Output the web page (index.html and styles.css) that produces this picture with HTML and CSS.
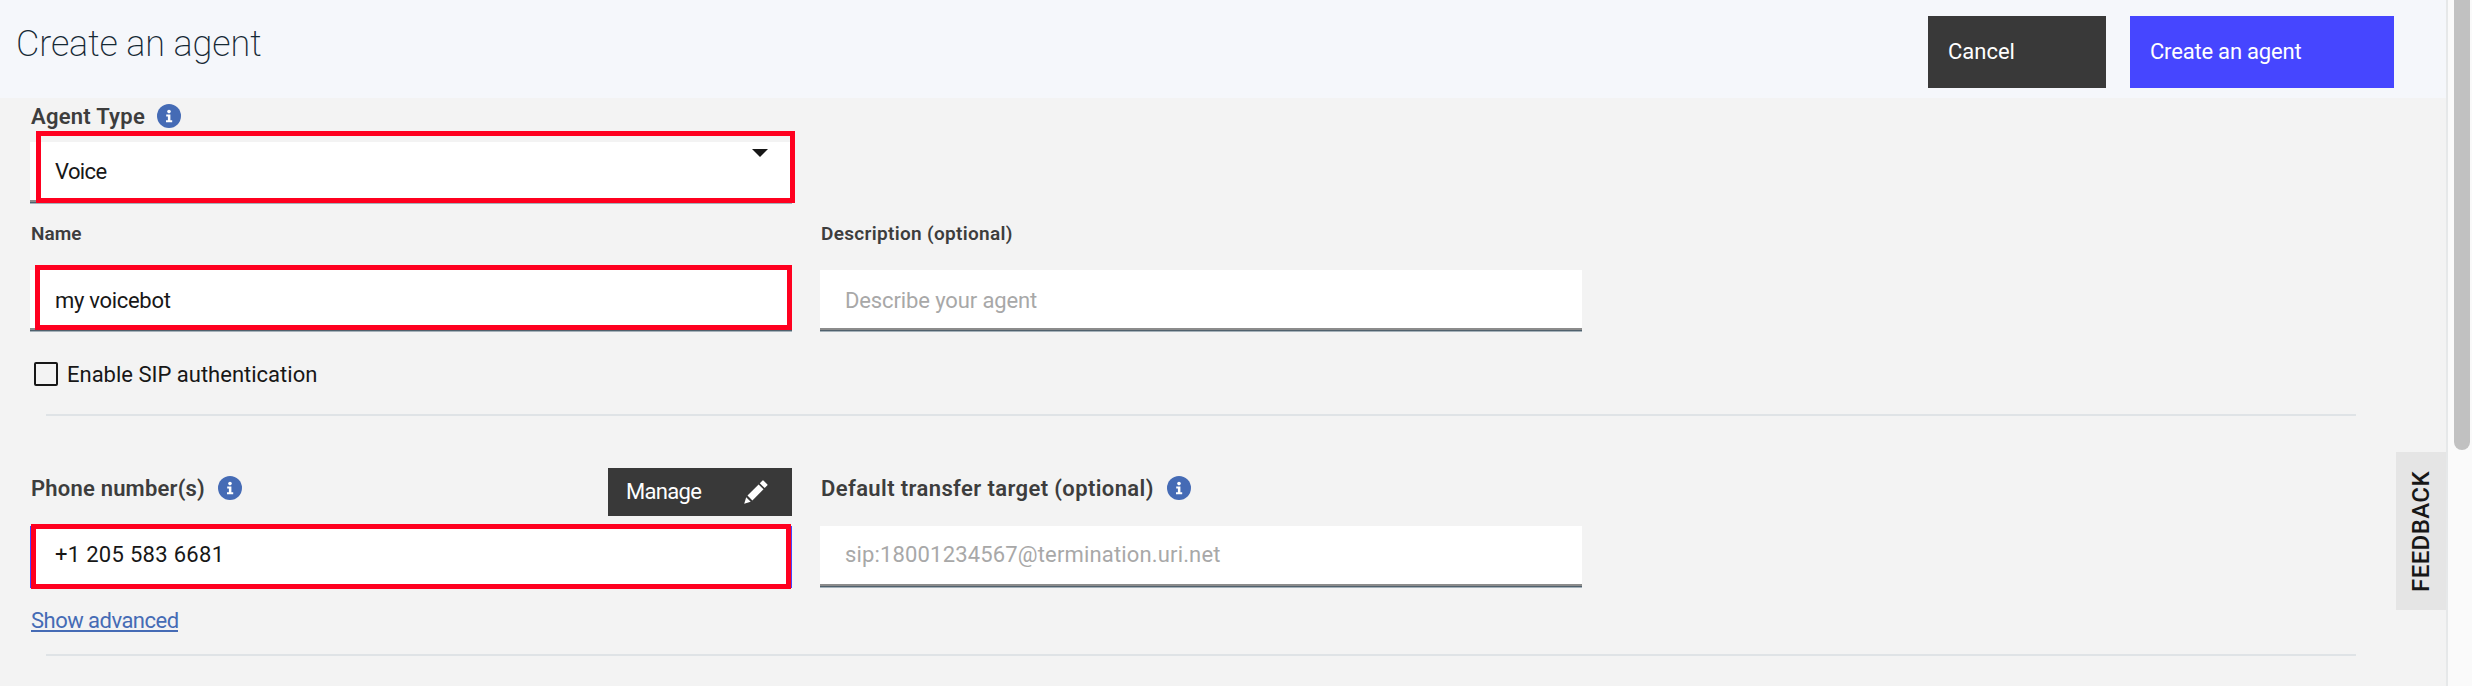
FILE: index.html
```html
<!DOCTYPE html>
<html lang="en">
<head>
<meta charset="utf-8">
<title>Create an agent</title>
<link rel="stylesheet" href="styles.css">
</head>
<body>
<svg class="defs" width="0" height="0" aria-hidden="true">
  <symbol id="info" viewBox="0 0 24 24">
    <circle cx="12" cy="12" r="12" fill="#456bb5"/>
    <circle cx="12" cy="7.6" r="1.8" fill="#fff"/>
    <path d="M9.2 10.5h4.2v5.8h1.8v1.9H9v-1.9h1.9v-3.9H9.2z" fill="#fff"/>
  </symbol>
</svg>
<div class="app">
  <main class="page">
    <header class="header">
      <h1 class="title">Create an agent</h1>
      <div class="actions">
        <button class="btn cancel"><span class="t-cancel">Cancel</span></button>
        <button class="btn primary"><span class="t-create">Create an agent</span></button>
      </div>
    </header>
    <form class="form">
      <div class="label-row type-row"><span class="label t-type">Agent Type</span><svg class="info"><use href="#info"/></svg></div>
      <div class="field select"><span class="t-voice">Voice</span>
        <svg class="caret" viewBox="0 0 16 8"><path d="M0 0h16L8 8z"/></svg>
        <i class="mark mark-type"></i>
      </div>
      <div class="columns">
        <div class="column">
          <div class="label-row name-row"><span class="label small t-name">Name</span></div>
          <div class="field low"><span class="t-bot">my voicebot</span><i class="mark mark-name"></i></div>
        </div>
        <div class="column">
          <div class="label-row name-row"><span class="label small t-desc">Description (optional)</span></div>
          <div class="field low hint"><span class="t-describe">Describe your agent</span></div>
        </div>
      </div>
      <div class="check-row"><span class="box"></span><span class="t-sip">Enable SIP authentication</span></div>
      <div class="rule"></div>
      <div class="columns numbers">
        <div class="column">
          <div class="label-row phone-row"><span class="label t-phone">Phone number(s)</span><svg class="info"><use href="#info"/></svg>
            <button type="button" class="manage"><span class="t-manage">Manage</span>
              <svg class="pencil" viewBox="0 0 24 24"><path d="M18.3 0.7a1 1 0 0 1 1.4 0l3.5 3.5a1 1 0 0 1 0 1.4l-2.5 2.5-4.9-4.9zM14.6 4.4l4.9 4.9L8.4 20.4l-4.9-4.9zM2.2 17.2l4.5 4.5L0.2 23.8z"/></svg>
            </button>
          </div>
          <div class="field focus"><span class="t-number">+1 205 583 6681</span><i class="mark mark-phone"></i></div>
        </div>
        <div class="column">
          <div class="label-row phone-row"><span class="label t-transfer">Default transfer target (optional)</span><svg class="info"><use href="#info"/></svg></div>
          <div class="field hint"><span class="t-uri">sip:18001234567@termination.uri.net</span></div>
        </div>
      </div>
      <a class="advanced"><span class="t-adv">Show advanced</span></a>
      <div class="rule last"></div>
    </form>
  </main>
  <div class="scrollbar"><div class="thumb"></div></div>
  <div class="feedback"><span>FEEDBACK</span></div>
</div>
</body>
</html>
```
FILE: styles.css
```css
* { box-sizing: border-box; }
body {
  margin: 0;
  font: 22px/24px Roboto, "Liberation Sans", sans-serif;
  color: #171717;
  background: #f3f3f3;
}
.defs { position: absolute; }
.app { display: flex; position: relative; height: 686px; overflow: hidden; }
.page { width: 2448px; border-right: 2px solid #e6e8e9; }
.header { display: flex; justify-content: space-between; height: 98px; padding: 16px 52px 0 16px; background: #f5f7fb; }
.title { margin: 4px 0 0; font-size: 36px; line-height: 48px; font-weight: 200; color: #152935; letter-spacing: -0.1px; white-space: nowrap; }
.actions { display: flex; gap: 24px; }
.btn { height: 72px; border: 0; padding: 0 20px; color: #fff; font: inherit; text-align: left; }
.cancel { width: 178px; background: #393939; }
.primary { width: 264px; background: #4646ff; }
.form { padding-left: 30px; }
.label-row { display: flex; align-items: center; }
.label { margin-left: 1px; padding-top: 2px; font-weight: 600; color: #3d3d3d; white-space: nowrap; }
.small { padding-top: 0; font-size: 19px; }
.info { width: 24px; height: 24px; margin-left: 12px; }
.type-row { height: 36px; margin-bottom: 8px; }
.name-row { height: 59px; margin-bottom: 7px; }
.columns { display: flex; gap: 28px; }
.column { width: 762px; }
.field {
  position: relative;
  display: flex;
  align-items: center;
  width: 762px;
  height: 62px;
  padding: 0 0 4px 25px;
  background: #fff;
  box-shadow: inset 0 -1px #a5b1b9, inset 0 -2px #50616d, inset 0 -4px #8c8c8c;
  white-space: nowrap;
}
.select { padding-top: 1px; }
.low { padding-top: 4px; }
.hint { color: #a8a8a8; }
.focus { box-shadow: inset 2px 0 #4646ff, inset -2px 0 #4646ff, inset 0 -1px #4646ff; }
.caret { position: absolute; left: 722px; top: 7px; width: 16px; height: 8px; fill: #171717; }
.mark { position: absolute; border: 5px solid #ff001f; }
.mark-type { left: 6px; top: -11px; width: 759px; height: 72px; }
.mark-name { left: 5px; top: -5px; width: 757px; height: 65px; }
.mark-phone { left: 1px; top: -2px; width: 760px; height: 65px; }
.check-row { display: flex; align-items: center; gap: 9px; height: 24px; margin: 30px 0 28px 4px; }
.box { width: 24px; height: 24px; border: 2px solid #171717; border-radius: 2px; }
.rule { width: 2310px; height: 2px; margin-left: 16px; background: #dfe3e6; }
.numbers { margin-top: 52px; }
.phone-row { position: relative; height: 40px; margin-bottom: 18px; }
.phone-row .info { margin-left: 13px; }
.manage { display: flex; align-items: center; align-self: flex-start; flex-shrink: 0; justify-content: space-between; width: 184px; height: 48px; margin-left: auto; padding: 0 24px 0 18px; border: 0; background: #393939; color: #fff; font: inherit; }
.pencil { width: 24px; height: 24px; fill: #fff; }
.advanced { display: block; width: 147px; height: 24px; margin: 20px 0 22px 1px; padding-top: 1px; line-height: 24px; border-bottom: 2px solid #456bb5; color: #456bb5; white-space: nowrap; }
.scrollbar { width: 24px; padding-left: 6px; background: #fafafa; }
.thumb { width: 16px; height: 450px; border-radius: 0 0 8px 8px; background: #c1c1c1; }
.feedback { position: absolute; left: 2396px; top: 452px; display: flex; align-items: center; justify-content: center; width: 50px; height: 158px; background: #e5e5e5; font-size: 24px; font-weight: 500; letter-spacing: 0.4px; }
.feedback span { writing-mode: vertical-rl; transform: rotate(180deg); white-space: nowrap; }
.t-create { letter-spacing: -0.2px; }
.t-type { letter-spacing: 0.25px; }
.t-voice { letter-spacing: -0.6px; }
.t-desc { letter-spacing: 0.32px; }
.t-bot { letter-spacing: -0.3px; }
.t-describe { letter-spacing: -0.12px; }
.t-sip { padding-top: 1px; }
.t-phone { letter-spacing: 0.2px; }
.t-manage { letter-spacing: -0.7px; }
.t-transfer { letter-spacing: 0.39px; }
.t-number { letter-spacing: 0.3px; }
.t-uri { letter-spacing: 0.16px; }
.t-adv { letter-spacing: -0.52px; }
```
